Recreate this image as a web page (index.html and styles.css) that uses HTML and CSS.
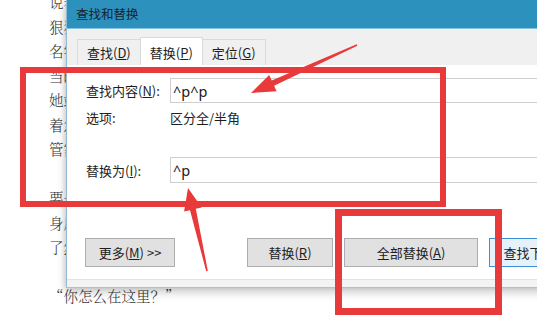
FILE: index.html
```html
<!DOCTYPE html>
<html lang="zh-CN">
<head>
<meta charset="utf-8">
<title>查找和替换</title>
<link rel="stylesheet" href="styles.css">
</head>
<body>
<div class="page">
  <div class="doc">
    <p class="line">说着便转身离开了房间。</p>
    <p class="line">狠狠地瞪了他一眼，转身就走。</p>
    <p class="line">名字叫什么来着，她一时想不起。</p>
    <p class="line">当时她并没有在意这件事情。</p>
    <p class="line">她站在门口，望着窗外的雨。</p>
    <p class="line">着急地四处张望，却不见人影。</p>
    <p class="line">管家在一旁低声说了几句。</p>
    <p class="line">&nbsp;</p>
    <p class="line">要是早知道会这样就好了。</p>
    <p class="line">身后传来一阵熟悉的脚步声。</p>
    <p class="line">了然地点了点头，没再多问。</p>
    <p class="line">&nbsp;</p>
    <p class="line">“你怎么在这里？”</p>
  </div>

  <div class="dialog">
    <div class="titlebar">查找和替换</div>
    <div class="tabs">
      <div class="tab">查找(<u>D</u>)</div>
      <div class="tab active">替换(<u>P</u>)</div>
      <div class="tab">定位(<u>G</u>)</div>
    </div>
    <div class="panel">
      <div class="row row-find">
        <span class="label">查找内容(<u>N</u>):</span>
        <div class="input">^p^p</div>
      </div>
      <div class="row row-opt">
        <span class="label">选项:</span>
        <span class="opt">区分全/半角</span>
      </div>
      <div class="row row-rep">
        <span class="label">替换为(<u>I</u>):</span>
        <div class="input">^p</div>
      </div>
      <div class="buttons">
        <div class="btn btn-more">更多(<u>M</u>) &gt;&gt;</div>
        <div class="btn btn-rep">替换(<u>R</u>)</div>
        <div class="btn btn-all">全部替换(<u>A</u>)</div>
        <div class="btn btn-next">查找下一处(<u>F</u>)</div>
      </div>
    </div>
    <div class="footer"></div>
  </div>

  <div class="mark mark-a"></div>
  <div class="mark mark-b"></div>

  <svg class="arrows" width="537" height="320" viewBox="0 0 537 320">
    <polygon class="arrow" points="356.7,44.3 271.7,80.4 269.2,74.9 251,93 276.6,91.3 274.1,85.8 357.3,45.7"/>
    <polygon class="arrow" points="206.2,271.2 190,210.2 184.1,211.5 188,188 201.7,207.5 195.8,208.8 207.8,270.8"/>
  </svg>
</div>
</body>
</html>
```
FILE: styles.css
```css
html, body {
  margin: 0;
  padding: 0;
  background: #ffffff;
}

.page {
  position: relative;
  width: 537px;
  height: 320px;
  overflow: hidden;
  background: #ffffff;
}

.doc {
  margin-top: -10px;
  padding-left: 49px;
}

.line {
  margin: 0;
  height: 24.5px;
  line-height: 24.5px;
  font-family: "Noto Serif CJK SC", "Noto Sans CJK SC", serif;
  font-size: 14.5px;
  font-weight: 300;
  color: #333333;
  white-space: nowrap;
}

/* dialog window floating over the document */
.dialog {
  position: absolute;
  left: 66px;
  top: 0;
  width: 520px;
  height: 287px;
  display: flex;
  flex-direction: column;
  background: #f0f0f0;
  border-left: 1px solid #93bad5;
  border-bottom: 1px solid #a9c2d4;
  box-shadow: 0 4px 9px rgba(0, 0, 0, 0.22), -2px 0 4px rgba(0, 0, 0, 0.08);
  font-family: "Noto Sans CJK SC", "Noto Sans", sans-serif;
  font-size: 13px;
  color: #1e1e1e;
}

.titlebar {
  flex: none;
  height: 28px;
  line-height: 27px;
  padding-left: 9px;
  background: #2c91bd;
  border-bottom: 1px solid #86c3df;
  color: #16242e;
  font-size: 12.5px;
}

.tabs {
  flex: none;
  height: 36px;
  display: flex;
  align-items: flex-end;
  padding-left: 10px;
  background: #f0f0f0;
}

.tab {
  height: 26px;
  line-height: 25px;
  padding: 0 9px;
  border: 1px solid #dadada;
  border-bottom: none;
  margin-right: -1px;
  background: #f0f0f0;
  box-sizing: border-box;
  white-space: nowrap;
}

.tab.active {
  height: 28px;
  padding-top: 2px;
  background: #ffffff;
  position: relative;
  z-index: 1;
}

.panel {
  flex: none;
  height: 214px;
  box-sizing: border-box;
  background: #ffffff;
  padding: 13px 0 0 19px;
}

.row {
  display: flex;
  align-items: center;
}

.row-find {
  height: 25px;
}

.row-opt {
  height: 18px;
  margin-top: 5px;
}

.row-rep {
  height: 26px;
  margin-top: 31px;
}

.label {
  flex: none;
  width: 84px;
  white-space: nowrap;
}

.opt {
  white-space: nowrap;
}

.input {
  flex: 1;
  height: 100%;
  box-sizing: border-box;
  border: 1px solid #cfcfcf;
  border-right: none;
  padding-left: 2px;
  display: flex;
  align-items: center;
  font-family: "Noto Sans", "Open Sans", sans-serif;
  font-size: 14.5px;
  color: #1a1a1a;
}

.buttons {
  display: flex;
  gap: 11px;
  margin-top: 55px;
  margin-left: -1px;
}

.btn {
  flex: none;
  height: 29px;
  box-sizing: border-box;
  border: 1px solid #adadad;
  background: #e1e1e1;
  display: flex;
  align-items: center;
  justify-content: center;
  white-space: nowrap;
}

.btn-more {
  width: 90px;
  margin-right: 61px;
}

.btn-rep {
  width: 86px;
}

.btn-all {
  width: 134px;
}

.btn-next {
  width: 110px;
  border-color: #3d8fd6;
  background: #e5f1fb;
}

.footer {
  flex: none;
  height: 7px;
  border-top: 1px solid #e2e2e2;
  background: #f3f3f3;
}

/* red annotation frames */
.mark {
  position: absolute;
  box-sizing: border-box;
  border-style: solid;
  border-color: #e8393b;
}

.mark-a {
  left: 20px;
  top: 67px;
  width: 426px;
  height: 140px;
  border-width: 6px;
}

.mark-b {
  left: 335px;
  top: 209px;
  width: 167px;
  height: 106px;
  border-width: 7px;
}

.arrows {
  position: absolute;
  left: 0;
  top: 0;
  pointer-events: none;
}

.arrow {
  fill: #e8393b;
}
```
